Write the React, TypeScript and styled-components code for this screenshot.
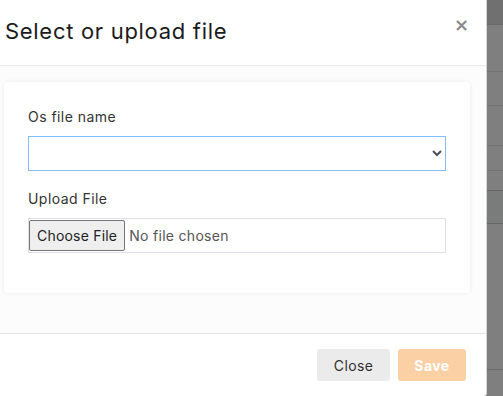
import styled, { createGlobalStyle } from "styled-components";

const GlobalStyle = createGlobalStyle`
  html, body {
    margin: 0;
    padding: 0;
    background: #7f7f7f;
  }
  * {
    box-sizing: border-box;
  }
`;

const font = `"Inter", "Open Sans", "Liberation Sans", sans-serif`;

const Page = styled.div`
  width: 503px;
  height: 396px;
  display: flex;
  overflow: hidden;
  font-family: ${font};
`;

const Modal = styled.div`
  width: 487px;
  height: 396px;
  background: #ffffff;
  border-right: 1px solid #d6d6d6;
  border-bottom-right-radius: 3px;
  display: flex;
  flex-direction: column;
`;

const Header = styled.div`
  height: 66px;
  flex: none;
  display: flex;
  align-items: center;
  justify-content: space-between;
  padding: 0 17px 3px 5px;
  border-bottom: 1px solid #e9e9ec;
`;

const Title = styled.h5`
  margin: 0;
  font-size: 22px;
  font-weight: 400;
  color: #1b1b1b;
  letter-spacing: 0.7px;
`;

const CloseX = styled.button`
  border: none;
  background: none;
  padding: 0;
  margin-top: -12px;
  font-size: 18px;
  font-weight: 700;
  line-height: 1;
  color: #8a8a8a;
  font-family: "DejaVu Sans", sans-serif;
  cursor: pointer;
`;

const Body = styled.div`
  flex: 1;
  background: #fcfcfd;
  padding: 16px 16px 40px 4px;
  border-bottom: 1px solid #e6e6e9;
`;

const Card = styled.div`
  background: #ffffff;
  border-radius: 4px;
  box-shadow: 0 0 4px rgba(40, 40, 80, 0.08);
  padding: 24px 24px 24px 24px;
  display: flex;
  flex-direction: column;
`;

const Group = styled.div<{ $gap: number }>`
  display: flex;
  flex-direction: column;
  margin-bottom: ${(p) => p.$gap}px;
`;

const Label = styled.label`
  font-size: 14px;
  letter-spacing: 0.45px;
  color: #333333;
  line-height: 22px;
  margin-bottom: 8px;
`;

const Select = styled.select`
  width: 100%;
  height: 35px;
  border: 1px solid #80bdff;
  border-radius: 0;
  outline: none;
  background: #ffffff;
  font-family: ${font};
  font-size: 14px;
  color: #495057;
  padding: 0 6px;
`;

const FileBox = styled.div`
  height: 35px;
  border: 1px solid #e0dfe8;
  display: flex;
  align-items: stretch;
  padding: 1px 1px 1px 0;
`;

const FileInput = styled.input`
  font-family: ${font};
  font-size: 14px;
  letter-spacing: 0.3px;
  color: #555555;
  width: 100%;
  &::file-selector-button {
    font-family: ${font};
    font-size: 14px;
    letter-spacing: 0.2px;
    color: #222222;
    height: 100%;
    padding: 0 7px;
    margin-right: 4px;
    background: #efefef;
    border: 1px solid #767676;
    border-radius: 2px;
  }
`;

const Footer = styled.div`
  height: 62px;
  flex: none;
  display: flex;
  align-items: flex-start;
  justify-content: flex-end;
  gap: 8px;
  padding: 15px 20px 0 0;
`;

const Button = styled.button<{ $primary?: boolean }>`
  height: 32px;
  border: none;
  border-radius: 3px;
  padding: 0 16.5px;
  font-family: ${font};
  font-size: 14px;
  letter-spacing: 0.4px;
  font-weight: ${(p) => (p.$primary ? 700 : 400)};
  color: ${(p) => (p.$primary ? "#ffffff" : "#2f2f2f")};
  background: ${(p) => (p.$primary ? "#fbd0a4" : "#ebebeb")};
`;

const Backdrop = styled.div`
  flex: 1;
  display: flex;
  flex-direction: column;
`;

const Stripe = styled.div<{ $h: number; $tone?: string; $line?: string }>`
  height: ${(p) => p.$h}px;
  flex: none;
  background: ${(p) => p.$tone || "#7f7f7f"};
  border-bottom: 1px solid ${(p) => p.$line || "#737373"};
`;

const stripes = [
  { h: 25, tone: "#707070", line: "#6a6a6a" },
  { h: 47 },
  { h: 34 },
  { h: 40 },
  { h: 25 },
  { h: 20, line: "#666666" },
  { h: 33, tone: "#7a7b7b", line: "#666666" },
  { h: 146, line: "#6a6a6a" },
  { h: 30 },
];

export default function App() {
  return (
    <Page>
      <GlobalStyle />
      <Modal>
        <Header>
          <Title>Select or upload file</Title>
          <CloseX aria-label="Close">×</CloseX>
        </Header>
        <Body>
          <Card>
            <Group $gap={17}>
              <Label>Os file name</Label>
              <Select defaultValue="">
                <option value=""></option>
              </Select>
            </Group>
            <Group $gap={16}>
              <Label>Upload File</Label>
              <FileBox>
                <FileInput type="file" />
              </FileBox>
            </Group>
          </Card>
        </Body>
        <Footer>
          <Button>Close</Button>
          <Button $primary>Save</Button>
        </Footer>
      </Modal>
      <Backdrop>
        {stripes.map((s, i) => (
          <Stripe key={i} $h={s.h} $tone={s.tone} $line={s.line} />
        ))}
      </Backdrop>
    </Page>
  );
}
